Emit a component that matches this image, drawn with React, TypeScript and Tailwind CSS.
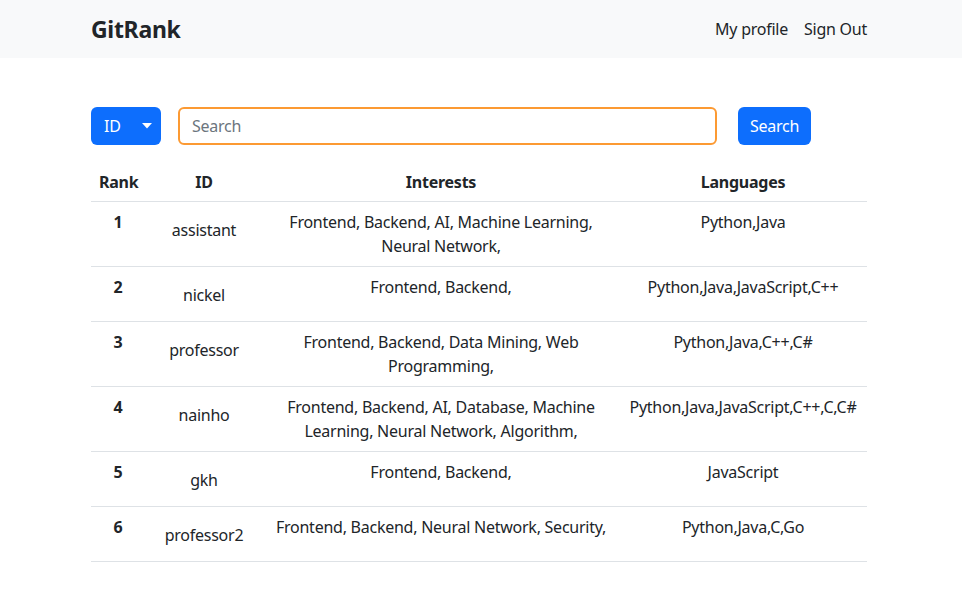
import React from 'react';

const rows = [
  { rank: 1, id: 'assistant', interests: 'Frontend, Backend, AI, Machine Learning, Neural Network,', langs: 'Python,Java' },
  { rank: 2, id: 'nickel', interests: 'Frontend, Backend,', langs: 'Python,Java,JavaScript,C++' },
  { rank: 3, id: 'professor', interests: 'Frontend, Backend, Data Mining, Web Programming,', langs: 'Python,Java,C++,C#' },
  { rank: 4, id: 'nainho', interests: 'Frontend, Backend, AI, Database, Machine Learning, Neural Network, Algorithm,', langs: 'Python,Java,JavaScript,C++,C,C#' },
  { rank: 5, id: 'gkh', interests: 'Frontend, Backend,', langs: 'JavaScript' },
  { rank: 6, id: 'professor2', interests: 'Frontend, Backend, Neural Network, Security,', langs: 'Python,Java,C,Go' },
];

const App: React.FC = () => {
  return (
    <div className="min-h-screen bg-white text-[#212529] text-base leading-6 tracking-[-0.25px] font-['Noto_Sans','Liberation_Sans',sans-serif]">
      {/* NAVBAR */}
      <nav className="bg-[#f8f9fa] h-[58px]">
        <div className="w-[776px] ml-[91px] h-full flex items-center justify-between">
          <span className="text-[23px] font-bold tracking-[-0.3px]">GitRank</span>
          <div className="flex gap-4">
            <a className="cursor-pointer">My profile</a>
            <a className="cursor-pointer">Sign Out</a>
          </div>
        </div>
      </nav>

      <main className="w-[776px] ml-[91px] pt-[49px]">
        {/* SEARCH */}
        <div className="flex items-center h-[38px]">
          <button className="w-[70px] h-[38px] bg-[#0d6efd] text-white rounded-md flex items-center pl-[13px] pr-[9px] justify-between">
            <span>ID</span>
            <svg width="10" height="6" viewBox="0 0 10 6"><path d="M0 0h10L5 5.5z" fill="white" /></svg>
          </button>
          <input
            placeholder="Search"
            className="ml-[17px] w-[539px] h-[38px] border-2 border-[#fc9a33] rounded-md px-3 outline-none placeholder:text-[#6c757d]"
          />
          <button className="ml-[21px] w-[73px] h-[38px] bg-[#0d6efd] text-white rounded-md">Search</button>
        </div>

        {/* TABLE */}
        <table className="mt-4 w-full text-center border-collapse table-fixed">
          <colgroup>
            <col className="w-[54px]" />
            <col className="w-[118px]" />
            <col className="w-[356px]" />
            <col className="w-[248px]" />
          </colgroup>
          <thead>
            <tr className="border-b border-[#dee2e6]">
              <th className="px-2 pt-[9px] pb-[7px] font-bold">Rank</th>
              <th className="px-2 pt-[9px] pb-[7px] font-bold">ID</th>
              <th className="px-2 pt-[9px] pb-[7px] font-bold">Interests</th>
              <th className="px-2 pt-[9px] pb-[7px] font-bold">Languages</th>
            </tr>
          </thead>
          <tbody>
            {rows.map((r) => (
              <tr key={r.rank} className="border-b border-[#dee2e6] align-top">
                <td className="p-2 font-bold">{r.rank}</td>
                <td className="p-2">
                  <span className="block pt-[8px] pb-[6px]">{r.id}</span>
                </td>
                <td className="p-2">{r.interests}</td>
                <td className="p-2">{r.langs}</td>
              </tr>
            ))}
          </tbody>
        </table>
      </main>
    </div>
  );
};

export default App;
